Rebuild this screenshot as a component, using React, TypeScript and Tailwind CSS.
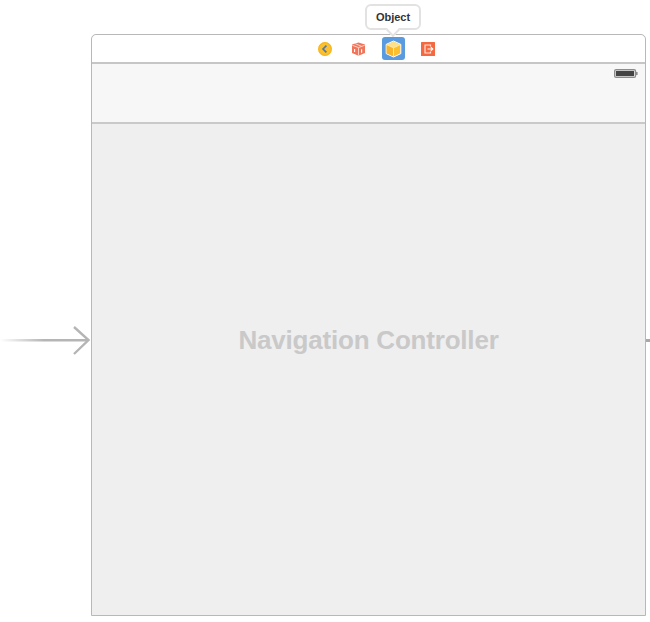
const F = "font-['Liberation_Sans',Arial,sans-serif]";

function Back() {
  return (
    <svg width="14" height="14" viewBox="0 0 14 14">
      <circle cx="7" cy="7" r="6.9" fill="#fbc02d" />
      <circle cx="7" cy="7" r="6.3" fill="none" stroke="#f2b01e" strokeWidth=".8" />
      <path d="M8.4 3.6 5 7l3.4 3.4" fill="none" stroke="#4f76b0" strokeWidth="1.6" />
    </svg>
  );
}
function Cube3D() {
  return (
    <svg width="15" height="14" viewBox="0 0 15 14">
      <path d="M7.5.4 14 2.6v8.4l-6.5 2.8L1 11V2.6z" fill="#f0755a" />
      <path d="M1.2 3.2 7.5 5.6l6.3-2.4M7.5 5.6v8M4.2 1.7l6.4 2.6" fill="none" stroke="#ffd9cf" strokeWidth=".9" />
      <path d="M10.6 7.2v3.6M3.6 7v3" stroke="#fff" strokeWidth="1.1" />
    </svg>
  );
}
function Box() {
  return (
    <svg width="17" height="18" viewBox="0 0 17 18">
      <path d="M8.5 1 15.8 4.4v9.2L8.5 17 1.2 13.6V4.4z" fill="#fbc02d" stroke="#fff" strokeWidth="1" strokeLinejoin="round" />
      <path d="M8.5 1.6 15.2 4.6 8.5 7.6 1.8 4.6z" fill="#fde08a" />
      <path d="M1.6 13.3V4.8L8.5 8v8.4z" fill="#f7b52c" />
      <path d="M1.6 4.6 8.5 7.8l6.9-3.2M8.5 7.8V16.6" fill="none" stroke="#fff3c9" strokeWidth=".8" />
    </svg>
  );
}
function Exit() {
  return (
    <svg width="14" height="14" viewBox="0 0 14 14">
      <rect width="14" height="14" fill="#f4693f" rx=".5" />
      <path d="M9.5 4.4V3H4v8h5.5V9.6" fill="none" stroke="#ffe3d9" strokeWidth="1.2" />
      <path d="M6.5 7h5M9.8 5.2 11.8 7l-2 1.8" fill="none" stroke="#fff" strokeWidth="1.1" />
    </svg>
  );
}
function Battery() {
  return (
    <svg width="24" height="9" viewBox="0 0 24 9" className="block">
      <rect x=".6" y=".6" width="21" height="7.8" rx="1.5" fill="#d8d8d8" stroke="#8c8c8c" strokeWidth="1.2" />
      <rect x="2" y="2" width="18" height="5" fill="#444" />
      <rect x="22" y="3" width="1.6" height="3" fill="#8a8a8a" />
    </svg>
  );
}

export default function App() {
  return (
    <div className={`${F} relative w-[650px] h-[622px] bg-white overflow-hidden pt-[34px] pl-[91px]`}>
      <div className="relative w-[555px] h-[582px] flex flex-col border border-[#b8b8b8] rounded-t-[5px] bg-[#efefef]">
        <div className="h-[29px] shrink-0 bg-white rounded-t-[5px] border-b-2 border-[#c6c6c6] flex items-center">
          <div className="ml-[226px] flex items-center">
            <Back />
            <div className="ml-[19px]"><Cube3D /></div>
            <div className="ml-[16px] w-[23px] h-[23px] bg-[#5a9be0] rounded-[3px] flex items-center justify-center"><Box /></div>
            <div className="ml-[16px]"><Exit /></div>
          </div>
        </div>
        <div className="h-[60px] shrink-0 bg-[#f7f7f7] border-b-2 border-[#c9c9c9] flex justify-end pt-[5px] pr-[7px]">
          <Battery />
        </div>
        <div className="flex-1 flex items-center justify-center pb-[59px]">
          <span className="text-[26px] font-bold text-[#c9c9c9] tracking-[-0.2px]">Navigation Controller</span>
        </div>
      </div>

      {/* tooltip */}
      <div className="absolute left-[365px] top-[4px] w-[56px] h-[26px] bg-white border-2 border-[#e2e2e2] rounded-[6px] flex items-center justify-center text-[11px] font-bold text-[#333]">
        Object
      </div>
      <div className="absolute left-[388px] top-[25px] w-[10px] h-[10px] bg-white border-r-2 border-b-2 border-[#e2e2e2] rotate-45" />

      {/* entry arrow */}
      <svg className="absolute left-0 top-[325px]" width="92" height="30" viewBox="0 0 92 30">
        <defs>
          <linearGradient id="g" x1="0" x2="1" y1="0" y2="0">
            <stop offset="0" stopColor="#b5b5b5" stopOpacity="0" />
            <stop offset="0.5" stopColor="#b5b5b5" />
            <stop offset="1" stopColor="#b5b5b5" />
          </linearGradient>
        </defs>
        <rect x="0" y="14" width="88" height="2.5" fill="url(#g)" />
        <path d="M74 2 88.5 15 74 29" fill="none" stroke="#b5b5b5" strokeWidth="2.4" />
      </svg>
      {/* exit stub */}
      <div className="absolute left-[646px] top-[339px] w-[4px] h-[3px] bg-[#a8a8a8]" />
    </div>
  );
}
